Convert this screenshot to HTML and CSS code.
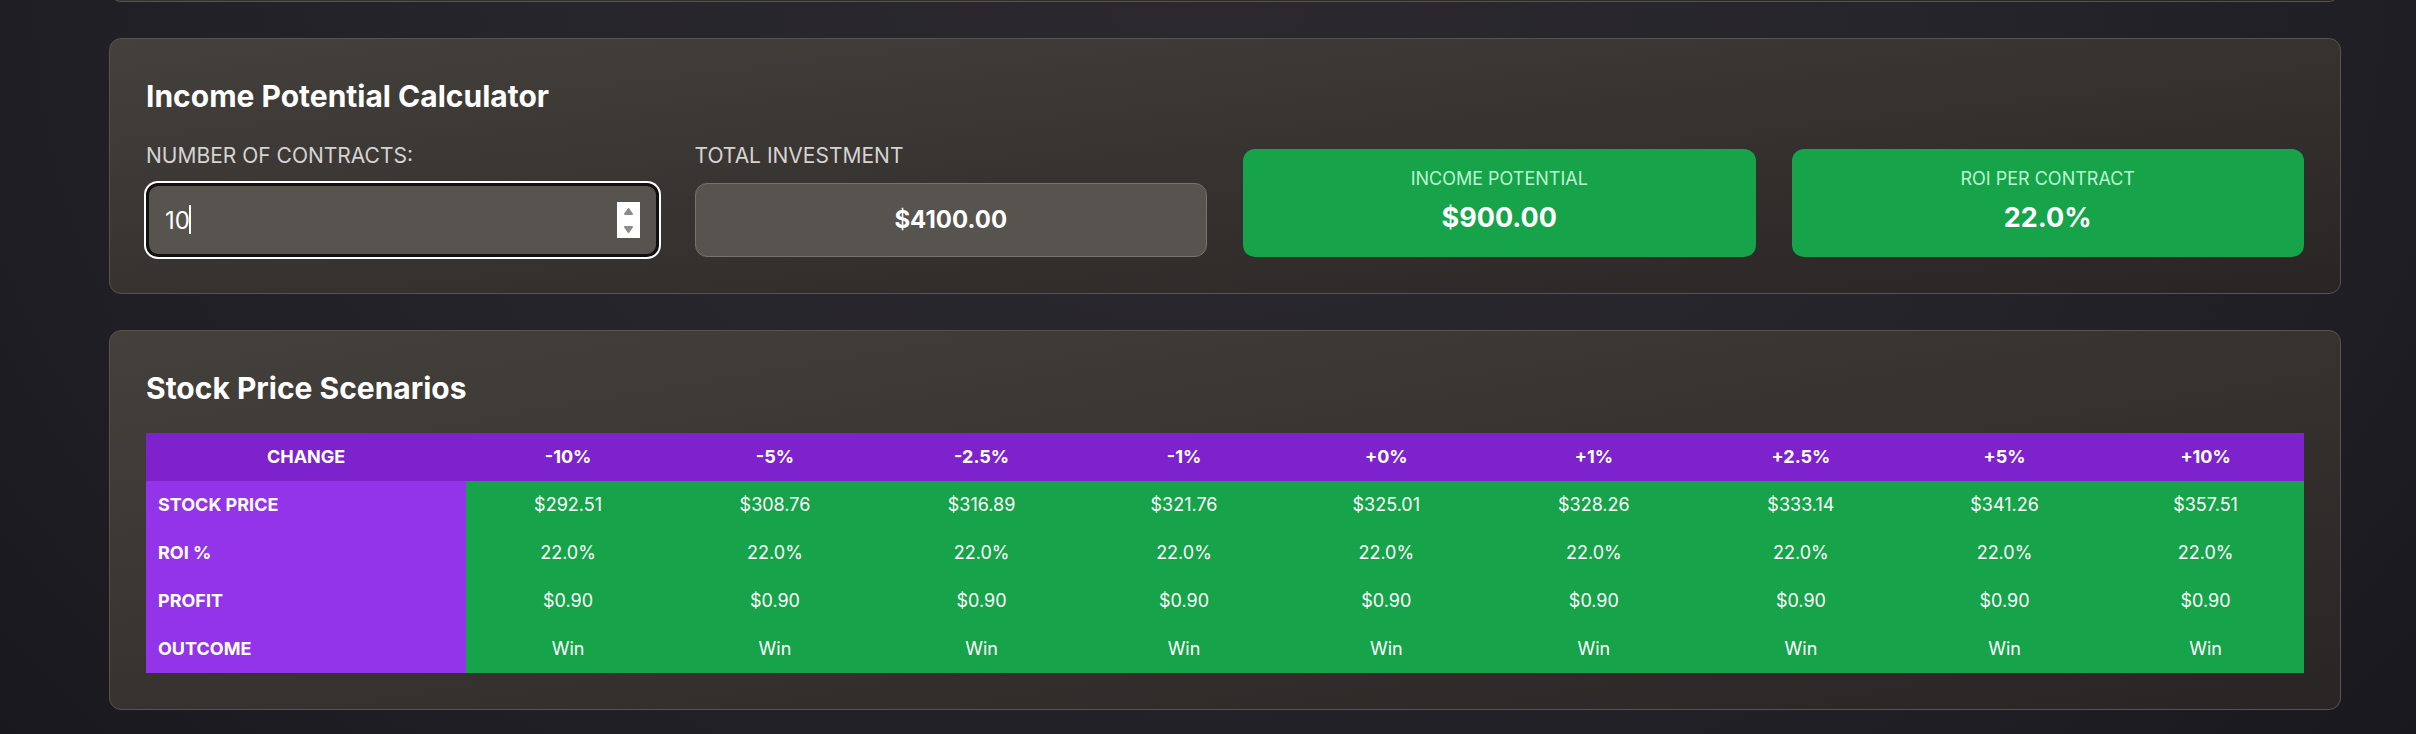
FILE: index.html
```html
<!DOCTYPE html>
<html lang="en">
<head>
<meta charset="utf-8">
<title>Options Calculator</title>
<link rel="stylesheet" href="styles.css">
</head>
<body>
<main class="page">
  <section class="card card-scrolled"></section>

  <section class="card">
    <h2 class="card-title">Income Potential Calculator</h2>
    <div class="calculator">
      <div class="field">
        <label class="field-label" for="contracts">NUMBER OF CONTRACTS:</label>
        <div class="number-box">
          <input class="number-input" id="contracts" type="number" min="1" value="10">
          <span class="caret"></span>
        </div>
      </div>
      <div class="field">
        <span class="field-label">TOTAL INVESTMENT</span>
        <output class="field-value" for="contracts">$4100.00</output>
      </div>
      <div class="stat">
        <span class="stat-label">INCOME POTENTIAL</span>
        <strong class="stat-value">$900.00</strong>
      </div>
      <div class="stat">
        <span class="stat-label">ROI PER CONTRACT</span>
        <strong class="stat-value">22.0%</strong>
      </div>
    </div>
  </section>

  <section class="card">
    <h2 class="card-title">Stock Price Scenarios</h2>
    <table class="scenarios">
      <thead>
        <tr><th>CHANGE</th><th>-10%</th><th>-5%</th><th>-2.5%</th><th>-1%</th><th>+0%</th><th>+1%</th><th>+2.5%</th><th>+5%</th><th>+10%</th></tr>
      </thead>
      <tbody>
        <tr><th scope="row">STOCK PRICE</th><td>$292.51</td><td>$308.76</td><td>$316.89</td><td>$321.76</td><td>$325.01</td><td>$328.26</td><td>$333.14</td><td>$341.26</td><td>$357.51</td></tr>
        <tr><th scope="row">ROI %</th><td>22.0%</td><td>22.0%</td><td>22.0%</td><td>22.0%</td><td>22.0%</td><td>22.0%</td><td>22.0%</td><td>22.0%</td><td>22.0%</td></tr>
        <tr><th scope="row">PROFIT</th><td>$0.90</td><td>$0.90</td><td>$0.90</td><td>$0.90</td><td>$0.90</td><td>$0.90</td><td>$0.90</td><td>$0.90</td><td>$0.90</td></tr>
        <tr><th scope="row">OUTCOME</th><td>Win</td><td>Win</td><td>Win</td><td>Win</td><td>Win</td><td>Win</td><td>Win</td><td>Win</td><td>Win</td></tr>
      </tbody>
    </table>
  </section>
</main>
</body>
</html>
```
FILE: styles.css
```css
* {
  box-sizing: border-box;
}

body {
  margin: 0;
  min-height: 100vh;
  overflow: hidden;
  background: radial-gradient(ellipse 64% 160% at 50% 0, #2b292e 0%, #26252b 45%, #1f1e24 78%, #19181d 100%);
  color: #fff;
  font-family: Inter, "Liberation Sans", sans-serif;
}

.page {
  display: flex;
  flex-direction: column;
  gap: 36px;
  margin-top: -72px;
  padding: 0 75px 24px 109px;
}

.card {
  padding: 36px;
  border: 1px solid #57534e;
  border-radius: 12px;
  background: linear-gradient(to bottom right, #44403c, #292524);
}

.card-title {
  margin: 0 0 24px;
  font-size: 30px;
  line-height: 42px;
  font-weight: 700;
}

.calculator {
  display: grid;
  grid-template-columns: repeat(4, 1fr);
  gap: 36px;
  align-items: end;
}

.field {
  display: flex;
  flex-direction: column;
  gap: 12px;
}

.field-label {
  color: #d6d3d1;
  font-size: 21px;
  line-height: 30px;
}

.number-box {
  position: relative;
}

.number-input,
.field-value {
  display: block;
  width: 100%;
  padding: 18px;
  border: 1px solid #78716c;
  border-radius: 12px;
  background: #57534e;
  color: #fff;
  font-family: inherit;
  font-size: 24px;
  line-height: 36px;
}

.number-input {
  height: 74px;
  border: 3px solid #121110;
  padding: 0 16px;
  outline: none;
  box-shadow: 0 0 0 2px #fff;
}

.number-input::-webkit-inner-spin-button {
  appearance: none;
  width: 23px;
  height: 36px;
  opacity: 1;
  background: #fff url("data:image/svg+xml,%3Csvg xmlns='http://www.w3.org/2000/svg' width='23' height='36' fill='%238b8b8b' stroke='%238b8b8b' stroke-width='2' stroke-linejoin='round'%3E%3Cpath d='M11.5 7L15 12H8zM8 25H15L11.500 30z'/%3E%3C/svg%3E") center no-repeat;
}

.caret {
  position: absolute;
  top: 22px;
  left: 43px;
  width: 2px;
  height: 29px;
  background: #fff;
}

.field-value {
  font-weight: 700;
  text-align: center;
}

.stat {
  display: flex;
  flex-direction: column;
  gap: 6px;
  padding: 18px;
  border-radius: 12px;
  background: #16a34a;
  text-align: center;
}

.stat-label {
  color: #bbf7d0;
  font-size: 18px;
  line-height: 24px;
}

.stat-value {
  font-size: 27px;
  line-height: 42px;
  font-weight: 700;
}

.scenarios {
  width: 100%;
  border-collapse: collapse;
  font-size: 18px;
  line-height: 24px;
}

.scenarios th,
.scenarios td {
  padding: 12px;
  text-align: center;
}

.scenarios thead {
  background: #7e22ce;
}

.scenarios tbody th {
  background: #9333ea;
  text-align: left;
}

.scenarios td {
  background: #16a34a;
}
```
